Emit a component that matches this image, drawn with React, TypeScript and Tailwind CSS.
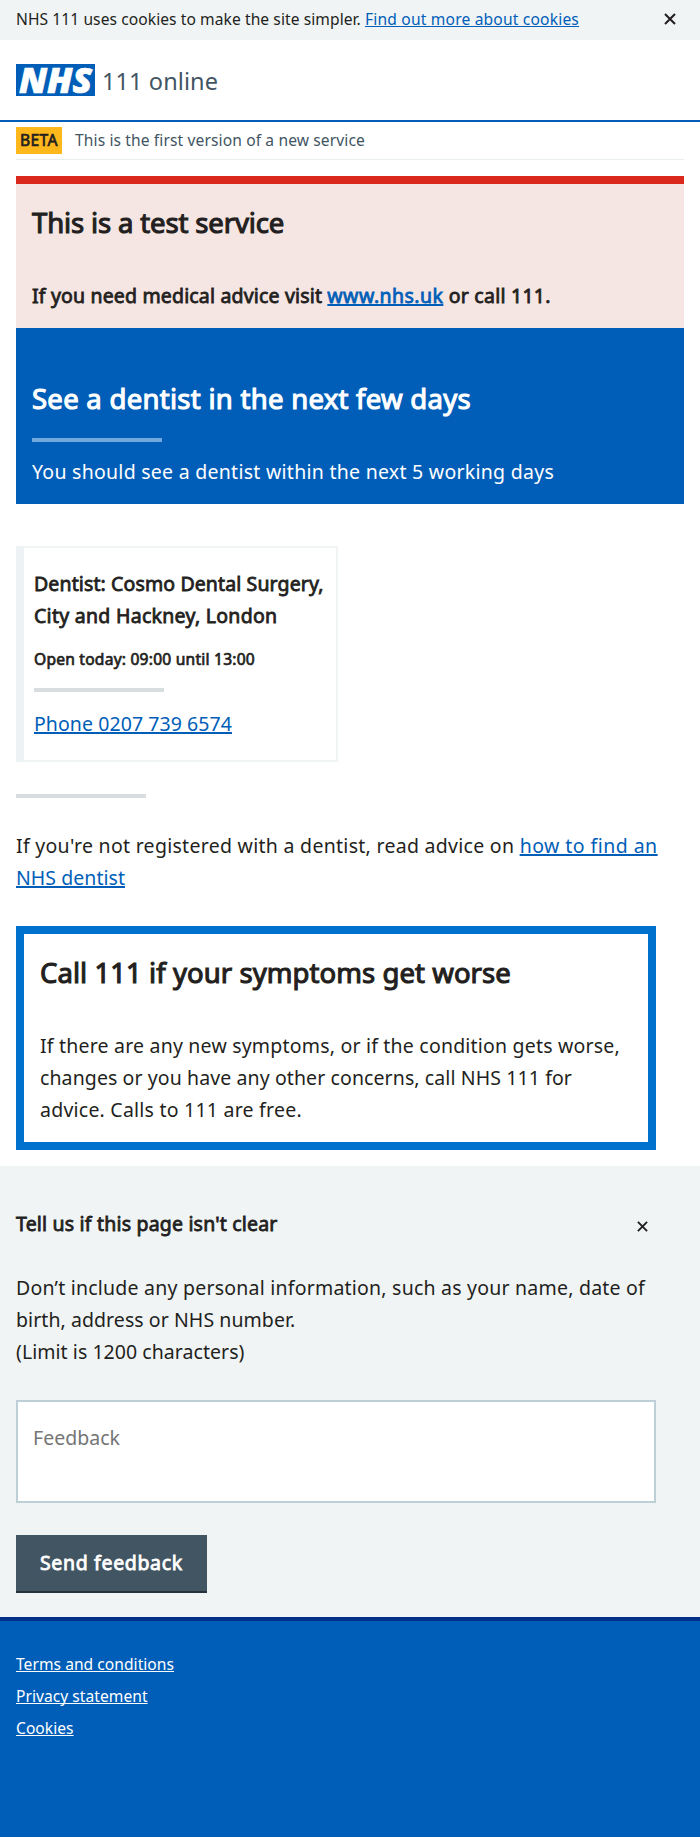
import React from "react";

const plainLink = "underline [text-decoration-skip-ink:none]";

function CloseIcon({ className }: { className: string }) {
  return (
    <svg viewBox="0 0 12 12" className={className} fill="none" stroke="currentColor" strokeWidth="2.1" aria-hidden="true">
      <path d="M1 1l10 10M11 1L1 11" />
    </svg>
  );
}

function CookieBar() {
  return (
    <div className="flex h-10 items-start justify-between bg-[#f0f4f5] pl-4 pr-6 text-[15.6px] leading-[38px]">
      <p className="flex whitespace-pre">
        <span className="tracking-[0.071px]">NHS 111 uses cookies to make the site simpler. </span>
        <a href="#" className={`${plainLink} tracking-[0.178px] text-[#005eb8] decoration-1 underline-offset-[1px]`}>
          Find out more about cookies
        </a>
      </p>
      <button type="button" aria-label="Close" className="mt-[13px]">
        <CloseIcon className="size-3" />
      </button>
    </div>
  );
}

function Header() {
  return (
    <header className="flex h-[82px] items-start border-b-2 border-[#005eb8] pl-4 pt-6">
      <svg viewBox="0 0 79 32" className="h-8 w-[79px]" role="img" aria-label="NHS">
        <rect width="79" height="32" fill="#005eb8" />
        <text
          x="3"
          y="28.8"
          fill="#fff"
          stroke="#fff"
          strokeWidth="0.7"
          fontFamily="Noto Sans, sans-serif"
          fontStyle="italic"
          fontWeight="900"
          fontSize="35.5"
          textLength="73"
          lengthAdjust="spacingAndGlyphs"
        >
          NHS
        </text>
      </svg>
      <span className="ml-[7px] mt-px text-[23.5px] leading-8 tracking-[0.1px] text-[#425563]">111 online</span>
    </header>
  );
}

function PhaseBanner() {
  return (
    <div className="mx-4 flex h-[38px] items-start border-b border-[#e8edee] pt-[5px] text-[15.6px]">
      <strong className="h-[27px] w-[46px] bg-[#ffb81c] pl-1 font-normal leading-[26px] tracking-[0.4px] [-webkit-text-stroke:0.7px]">
        BETA
      </strong>
      <span className="ml-[13px] leading-[26px] tracking-[0.112px] text-[#425563]">This is the first version of a new service</span>
    </div>
  );
}

function TestBanner() {
  return (
    <section className="mx-4 mt-4 h-[152px] border-t-8 border-[#da291c] bg-[#f5e5e3] pl-4 pt-[18px]">
      <h2 className="text-[27.5px] leading-[41px] tracking-[-0.14px] [-webkit-text-stroke:1.1px]">This is a test service</h2>
      <p className="mt-[37px] flex whitespace-pre text-[19.5px] leading-8 [-webkit-text-stroke:0.8px]">
        <span className="tracking-[0.17px]">If you need medical advice visit </span>
        <a href="#" className={`${plainLink} tracking-[0.444px] text-[#005eb8] decoration-2 underline-offset-[1px]`}>
          www.nhs.uk
        </a>
        <span className="tracking-[0.25px]"> or call 111.</span>
      </p>
    </section>
  );
}

function Outcome() {
  return (
    <section className="mx-4 h-[176px] bg-[#005eb8] pl-4 pt-[50px] text-white">
      <h1 className="text-[27.5px] leading-[41px] tracking-[0.275px] [-webkit-text-stroke:1.1px]">
        See a dentist in the next few days
      </h1>
      <hr className="mt-[19px] h-1 w-[130px] border-0 bg-[#73a8dc]" />
      <p className="mt-[14px] text-[19.5px] leading-8 tracking-[0.267px]">
        You should see a dentist within the next 5 working days
      </p>
    </section>
  );
}

function ServiceCard() {
  return (
    <section className="ml-4 mt-[42px] h-[216px] w-[322px] border-2 border-l-8 border-[#f0f4f5] border-l-[#edf2f5] pl-[10px] pt-5">
      <h3 className="flex flex-col whitespace-nowrap text-[19.5px] leading-8 [-webkit-text-stroke:0.8px]">
        <span className="tracking-[0.12px]">Dentist: Cosmo Dental Surgery,</span>
        <span className="tracking-[0.28px]">City and Hackney, London</span>
      </h3>
      <p className="mt-[11px] text-[15.6px] leading-8 tracking-[0.22px] [-webkit-text-stroke:0.7px]">Open today: 09:00 until 13:00</p>
      <hr className="mt-[13px] h-1 w-[130px] border-0 bg-[#d8dde0]" />
      <a
        href="#"
        className={`${plainLink} mt-4 inline-block text-[19.5px] leading-8 tracking-[0.074px] text-[#005eb8] decoration-2 underline-offset-[1px]`}
      >
        Phone 0207 739 6574
      </a>
    </section>
  );
}

function Registration() {
  return (
    <section className="ml-4">
      <hr className="mt-8 h-1 w-[130px] border-0 bg-[#d8dde0]" />
      <p className="mt-8 whitespace-pre text-[19.5px] leading-8">
        <span className="tracking-[0.285px]">If you're not registered with a dentist, read advice on </span>
        <a href="#" className={`${plainLink} text-[#005eb8] decoration-2 underline-offset-[1px]`}>
          <span className="tracking-[0.457px]">how to find an</span>
          <br />
          <span className="tracking-[0.042px]">NHS dentist</span>
        </a>
      </p>
    </section>
  );
}

function CareCard() {
  return (
    <section className="ml-4 mt-8 h-[224px] w-[640px] border-8 border-[#0072ce] pl-4 pt-[18px]">
      <h2 className="text-[27.5px] leading-[41px] tracking-[0.065px] [-webkit-text-stroke:1.1px]">
        Call 111 if your symptoms get worse
      </h2>
      <p className="mt-[37px] flex flex-col whitespace-nowrap text-[19.5px] leading-8">
        <span className="tracking-[0.202px]">If there are any new symptoms, or if the condition gets worse,</span>
        <span className="tracking-[0.099px]">changes or you have any other concerns, call NHS 111 for</span>
        <span className="tracking-[0.23px]">advice. Calls to 111 are free.</span>
      </p>
    </section>
  );
}

function Feedback() {
  return (
    <section className="mt-4 h-[451px] bg-[#f0f4f5] pl-4 pt-[42px] text-[19.5px] leading-8">
      <div className="flex w-[640px] items-start justify-between pr-2">
        <h3 className="tracking-[0.19px] [-webkit-text-stroke:0.8px]">Tell us if this page isn't clear</h3>
        <button type="button" aria-label="Close" className="mt-[13px]">
          <CloseIcon className="size-[11px]" />
        </button>
      </div>
      <p className="mt-8 flex flex-col whitespace-nowrap">
        <span className="tracking-[0.22px]">Don’t include any personal information, such as your name, date of</span>
        <span className="tracking-[0.07px]">birth, address or NHS number.</span>
        <span className="tracking-[0.05px]">(Limit is 1200 characters)</span>
      </p>
      <textarea
        placeholder="Feedback"
        className="mt-8 block h-[103px] w-[640px] resize-none border-2 border-[#bed0d7] bg-white px-[15px] py-5 tracking-[0.023px] placeholder:text-[#757575]"
      />
      <button
        type="button"
        className="mt-8 block h-[58px] w-[191px] border-b-2 border-[#263139] bg-[#425563] pb-px pl-6 text-left tracking-[0.66px] text-white [-webkit-text-stroke:0.8px]"
      >
        Send feedback
      </button>
    </section>
  );
}

function Footer() {
  return (
    <footer className="flex h-[220px] flex-col items-start border-t-4 border-[#003087] bg-[#005eb8] pl-4 pt-[27px] text-[15.6px] leading-8 tracking-[0.035px] text-white">
      {["Terms and conditions", "Privacy statement", "Cookies"].map((label) => (
        <a key={label} href="#" className={`${plainLink} decoration-1 underline-offset-[1px]`}>
          {label}
        </a>
      ))}
    </footer>
  );
}

export default function App() {
  return (
    <main className="h-[1838px] overflow-hidden bg-white font-['Noto_Sans',sans-serif] text-[#231f20]">
      <CookieBar />
      <Header />
      <PhaseBanner />
      <TestBanner />
      <Outcome />
      <ServiceCard />
      <Registration />
      <CareCard />
      <Feedback />
      <Footer />
    </main>
  );
}
